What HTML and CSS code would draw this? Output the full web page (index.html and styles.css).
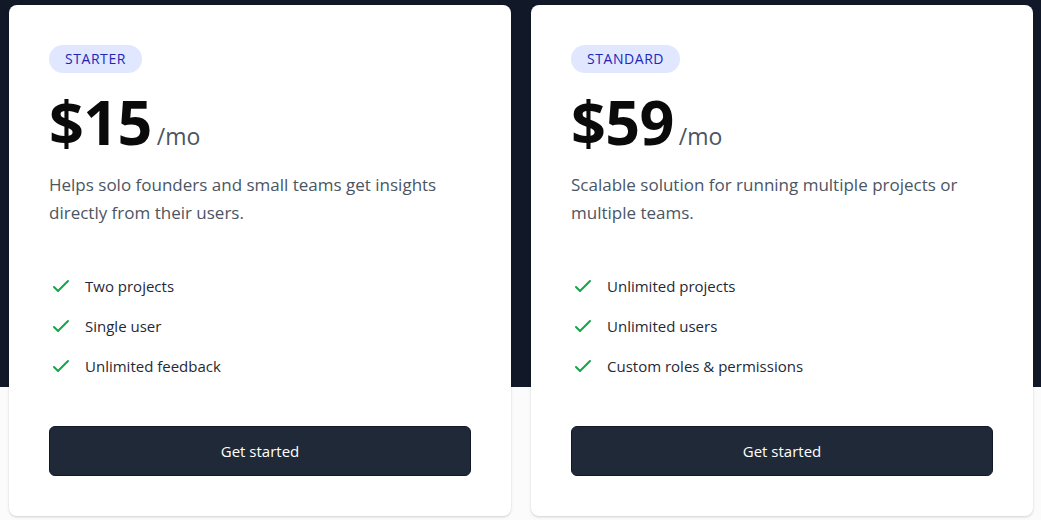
FILE: index.html
```html
<!DOCTYPE html>
<html lang="en">
<head>
<meta charset="utf-8">
<title>Pricing</title>
<link rel="stylesheet" href="styles.css">
</head>
<body>
<section class="pricing">
  <div class="cards">
    <div class="card">
      <div class="card-top">
        <span class="badge">Starter</span>
        <div class="price"><span class="amount">$15</span><span class="per">/mo</span></div>
        <p class="desc">Helps solo founders and small teams get insights directly from their users.</p>
      </div>
      <ul class="features">
        <li><svg class="check" viewBox="0 0 24 24" fill="none" stroke="currentColor" stroke-width="2" stroke-linecap="round" stroke-linejoin="round"><path d="M5 13l4 4L19 7"/></svg><span>Two projects</span></li>
        <li><svg class="check" viewBox="0 0 24 24" fill="none" stroke="currentColor" stroke-width="2" stroke-linecap="round" stroke-linejoin="round"><path d="M5 13l4 4L19 7"/></svg><span>Single user</span></li>
        <li><svg class="check" viewBox="0 0 24 24" fill="none" stroke="currentColor" stroke-width="2" stroke-linecap="round" stroke-linejoin="round"><path d="M5 13l4 4L19 7"/></svg><span>Unlimited feedback</span></li>
      </ul>
      <a class="btn" href="#">Get started</a>
    </div>
    <div class="card">
      <div class="card-top">
        <span class="badge">Standard</span>
        <div class="price"><span class="amount">$59</span><span class="per">/mo</span></div>
        <p class="desc">Scalable solution for running multiple projects or multiple teams.</p>
      </div>
      <ul class="features">
        <li><svg class="check" viewBox="0 0 24 24" fill="none" stroke="currentColor" stroke-width="2" stroke-linecap="round" stroke-linejoin="round"><path d="M5 13l4 4L19 7"/></svg><span>Unlimited projects</span></li>
        <li><svg class="check" viewBox="0 0 24 24" fill="none" stroke="currentColor" stroke-width="2" stroke-linecap="round" stroke-linejoin="round"><path d="M5 13l4 4L19 7"/></svg><span>Unlimited users</span></li>
        <li><svg class="check" viewBox="0 0 24 24" fill="none" stroke="currentColor" stroke-width="2" stroke-linecap="round" stroke-linejoin="round"><path d="M5 13l4 4L19 7"/></svg><span>Custom roles &amp; permissions</span></li>
      </ul>
      <a class="btn" href="#">Get started</a>
    </div>
  </div>
</section>
</body>
</html>
```
FILE: styles.css
```css
* { box-sizing: border-box; }
html, body { margin: 0; padding: 0; }
body {
  font-family: "Segoe UI", "Open Sans", "Noto Sans", sans-serif;
  background: #fbfbfc;
  width: 1041px;
  height: 520px;
  overflow: hidden;
}
.pricing {
  background: linear-gradient(to bottom, #111827 0, #111827 387px, #fbfbfc 387px);
  height: 520px;
  padding: 5px 8px 0 9px;
}
.cards {
  display: flex;
  gap: 20px;
}
.card {
  width: 502px;
  height: 511px;
  background: #fff;
  border-radius: 8px;
  box-shadow: 0 1px 3px rgba(0,0,0,0.12), 0 1px 2px rgba(0,0,0,0.06);
  padding: 40px;
  display: flex;
  flex-direction: column;
}
.badge {
  align-self: flex-start;
  display: inline-block;
  background: #e0e7ff;
  color: #2226b8;
  font-size: 14px;
  line-height: 20px;
  padding: 4px 16px;
  border-radius: 999px;
  text-transform: uppercase;
  letter-spacing: 0.04em;
}
.card-top { display: flex; flex-direction: column; }
.price {
  display: flex;
  align-items: baseline;
  margin-top: 19px;
  color: #0a0a0a;
}
.amount {
  font-size: 61px;
  font-weight: 700;
  line-height: 60px;
  letter-spacing: -0.01em;
}
.per {
  font-size: 23px;
  color: #4b5563;
  margin-left: 5px;
}
.desc {
  margin: 19px 0 0;
  font-size: 17px;
  line-height: 28px;
  color: #4b5563;
  max-width: 400px;
}
.features {
  list-style: none;
  margin: 47px 0 0;
  padding: 0;
  display: flex;
  flex-direction: column;
  gap: 16px;
}
.features li {
  display: flex;
  align-items: center;
  font-size: 15px;
  line-height: 24px;
  color: #1f2937;
}
.check {
  width: 24px;
  height: 24px;
  color: #16a34a;
  flex: none;
  margin-right: 12px;
}
.btn {
  margin-top: auto;
  display: flex;
  align-items: center;
  justify-content: center;
  height: 50px;
  background: #1f2937;
  border: 1px solid #111827;
  color: #fff;
  border-radius: 6px;
  font-size: 15px;
  text-decoration: none;
}
```
